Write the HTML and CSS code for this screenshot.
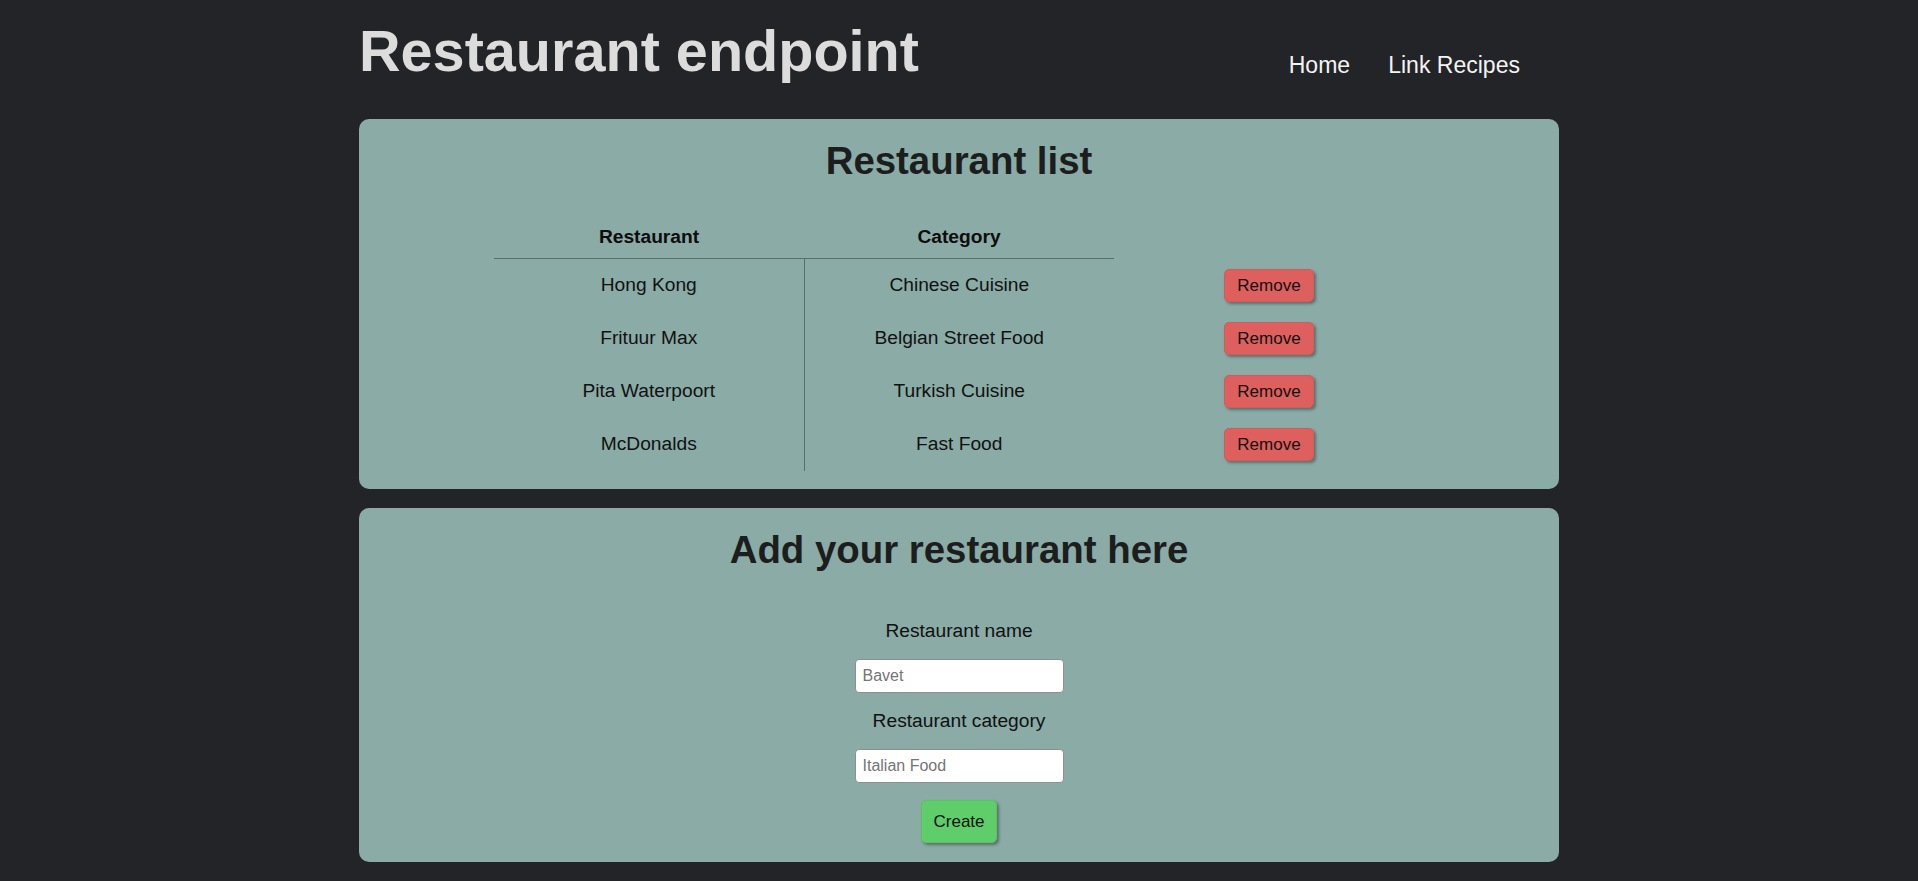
FILE: index.html
```html
<!DOCTYPE html>
<html lang="en">
<head>
<meta charset="utf-8">
<title>Restaurant endpoint</title>
<link rel="stylesheet" href="styles.css">
</head>
<body>
<div class="page">
  <header class="header">
    <h1 class="title">Restaurant endpoint</h1>
    <nav class="nav">
      <a class="nav-link" href="#">Home</a>
      <a class="nav-link" href="#">Link Recipes</a>
    </nav>
  </header>
  <main class="main">
    <section class="card list-card">
      <h2 class="card-title">Restaurant list</h2>
      <table class="list">
        <thead>
          <tr><th class="col-name">Restaurant</th><th class="col-cat">Category</th><th class="col-act"></th></tr>
        </thead>
        <tbody>
          <tr><td class="col-name">Hong Kong</td><td>Chinese Cuisine</td><td><button class="btn btn-remove">Remove</button></td></tr>
          <tr><td class="col-name">Frituur Max</td><td>Belgian Street Food</td><td><button class="btn btn-remove">Remove</button></td></tr>
          <tr><td class="col-name">Pita Waterpoort</td><td>Turkish Cuisine</td><td><button class="btn btn-remove">Remove</button></td></tr>
          <tr><td class="col-name">McDonalds</td><td>Fast Food</td><td><button class="btn btn-remove">Remove</button></td></tr>
        </tbody>
      </table>
    </section>
    <section class="card">
      <h2 class="card-title form-title">Add your restaurant here</h2>
      <form class="form">
        <label class="label" for="rname">Restaurant name</label>
        <input class="input" id="rname" type="text" placeholder="Bavet">
        <label class="label" for="rcat">Restaurant category</label>
        <input class="input" id="rcat" type="text" placeholder="Italian Food">
        <button class="btn btn-create" type="button">Create</button>
      </form>
    </section>
  </main>
</div>
</body>
</html>
```

FILE: styles.css
```css
html, body {
  margin: 0;
  padding: 0;
}
body {
  background: #232427;
  font-family: "Liberation Sans", Arial, sans-serif;
  font-size: 19.2px;
  color: #111;
}
.page {
  width: 1200px;
  margin: 0 auto;
}
.header {
  display: flex;
  justify-content: space-between;
  align-items: flex-start;
  padding-top: 18px;
}
.title {
  margin: 0;
  font-size: 57.6px;
  font-weight: bold;
  color: #dcdcdc;
  line-height: normal;
}
.nav {
  display: flex;
  gap: 38px;
  margin-top: 34px;
  padding-right: 39px;
}
.nav-link {
  color: #f4f4f4;
  text-decoration: none;
  font-size: 23.04px;
  line-height: normal;
}
.main {
  display: flex;
  flex-direction: column;
  gap: 19px;
  margin-top: 35px;
}
.card {
  background: #8aaba6;
  border-radius: 10px;
  padding: 20px 0 19px;
}
.list-card {
  padding-bottom: 18px;
}
.card-title {
  margin: 0 0 33px;
  text-align: center;
  font-size: 38.4px;
  font-weight: bold;
  color: #1c1d1d;
  line-height: normal;
}
.form-title {
  margin-bottom: 48px;
}
.list {
  width: 930px;
  margin: 0 auto;
  border-collapse: collapse;
  table-layout: fixed;
}
.list th,
.list td {
  box-sizing: border-box;
  width: 310px;
  padding: 10px;
  text-align: center;
  vertical-align: middle;
  line-height: normal;
}
.list th {
  font-weight: bold;
  color: #0d0d0d;
}
.list th.col-name,
.list th.col-cat {
  border-bottom: 1px solid #55706c;
}
.list td.col-name {
  border-right: 1px solid #55706c;
}
.btn {
  font-family: "Liberation Sans", Arial, sans-serif;
  font-size: 17px;
  line-height: 19px;
  color: #111;
  border-radius: 5px;
  box-shadow: 2px 2px 3px rgba(0, 0, 0, 0.35);
  cursor: pointer;
}
.btn-remove {
  background: #dd5f5e;
  border: 1px solid #d65a5a;
  padding: 6px 12px;
  vertical-align: middle;
}
.btn-create {
  background: #5ecd6a;
  border: 1px solid #58c464;
  padding: 11px 11px;
}
.form {
  display: flex;
  flex-direction: column;
  align-items: center;
  gap: 17px;
}
.label {
  line-height: normal;
  color: #111;
}
.input {
  box-sizing: border-box;
  width: 209px;
  height: 34px;
  border: 1px solid #8f8f8f;
  border-radius: 4px;
  background: #fff;
  padding: 0 7px;
  font-family: "Liberation Sans", Arial, sans-serif;
  font-size: 16px;
  color: #111;
}
.input::placeholder {
  color: #757575;
}
```
